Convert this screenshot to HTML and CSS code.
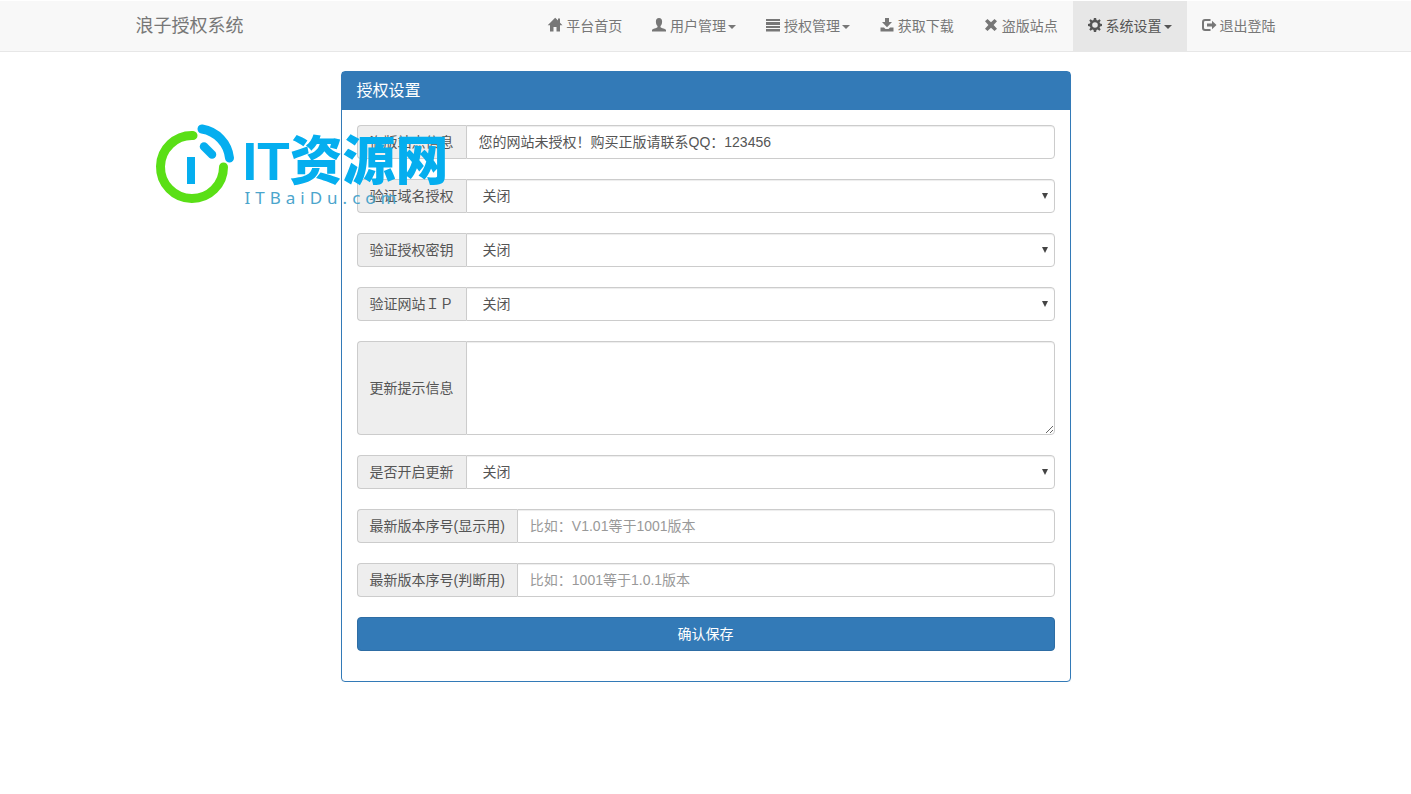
FILE: index.html
```html
<!DOCTYPE html>
<html lang="zh-CN">
<head>
<meta charset="utf-8">
<meta name="viewport" content="width=device-width, initial-scale=1">
<title>授权设置</title>
<link rel="stylesheet" href="styles.css">
</head>
<body>
<header class="navbar">
  <div class="container navbar-inner">
    <a class="brand" href="#">浪子授权系统</a>
    <nav class="nav">
      <a class="nav-link" href="#"><svg class="icon" viewBox="0 0 14 14"><path d="M7.200-.3-.3 7.200H2V13.500h3.500V9h3v4.500H12V7.200h2.500L12 4.700V.5h-2v2z"/></svg> 平台首页</a>
      <a class="nav-link" href="#"><svg class="icon" viewBox="0 0 14 14"><path d="M7 0C4.900 0 3.900 1.500 3.900 3.500c0 2 .6 3.500 1.600 4.500v1.200C4.500 10.200.5 10.700 0 12v1.500h14V12c-.5-1.300-4.500-1.800-5.500-2.800V8c1-1 1.600-2.500 1.600-4.500C10.100 1.500 9.100 0 7 0z"/></svg> 用户管理<span class="caret"></span></a>
      <a class="nav-link" href="#"><svg class="icon" viewBox="0 0 14 14"><path d="M0 1h14v2H0zM0 4h14v3H0zM0 8h14v2H0zM0 11h14v2.500H0z"/></svg> 授权管理<span class="caret"></span></a>
      <a class="nav-link" href="#"><svg class="icon" viewBox="0 0 14 14"><path d="M5 0h4v4h3L7 9.200 2 4h3zM.5 9.500H4L5.500 11h3L10 9.500h3.500v4H.5z"/></svg> 获取下载</a>
      <a class="nav-link" href="#"><svg class="icon" viewBox="0 0 14 14"><path d="M3.500 1 7 4.200 10.500 1 13 3.300 9.600 7 13 10.700 10.500 13 7 9.800 3.500 13 1 10.700 4.400 7 1 3.300z"/></svg> 盗版站点</a>
      <a class="nav-link active" href="#" aria-current="page"><svg class="icon" viewBox="0 0 14 14"><path fill-rule="evenodd" d="M5.900 0h2.200l.4 1.900 1.200.5L11.400 1.300 12.700 2.600 11.600 4.300l.5 1.200 1.900.4v2.200l-1.900.4-.5 1.200 1.100 1.700-1.300 1.300-1.700-1.100-1.200.5-.4 1.900H5.900l-.4-1.900-1.200-.5-1.700 1.100-1.300-1.300 1.100-1.700-.5-1.200L0 8.100V5.900l1.900-.4.5-1.200L1.300 2.600 2.600 1.300l1.700 1.100 1.200-.5zM7 4.200a2.800 2.800 0 1 0 0 5.600 2.800 2.800 0 0 0 0-5.600z"/></svg> 系统设置<span class="caret"></span></a>
      <a class="nav-link" href="#"><svg class="icon" viewBox="0 0 14 14"><path d="M8.500 1H3Q0 1 0 4v6q0 3 3 3h5.500v-2H3.300Q2 11 2 9.800V4.200Q2 3 3.300 3h5.200zM10 2.800 14.500 7 10 11.200V8.500H5v-3h5z"/></svg> 退出登陆</a>
    </nav>
  </div>
</header>

<main class="container">
  <section class="panel">
    <h1 class="panel-heading">授权设置</h1>
    <form class="panel-body">
      <div class="input-group">
        <label class="addon" for="notice">盗版站点信息</label>
        <input class="control" id="notice" type="text" value="您的网站未授权！购买正版请联系QQ：123456">
      </div>
      <div class="input-group">
        <label class="addon" for="domain">验证域名授权</label>
        <div class="select-wrap"><select class="control" id="domain"><option>关闭</option><option>开启</option></select></div>
      </div>
      <div class="input-group">
        <label class="addon" for="key">验证授权密钥</label>
        <div class="select-wrap"><select class="control" id="key"><option>关闭</option><option>开启</option></select></div>
      </div>
      <div class="input-group">
        <label class="addon" for="ip">验证网站ＩＰ</label>
        <div class="select-wrap"><select class="control" id="ip"><option>关闭</option><option>开启</option></select></div>
      </div>
      <div class="input-group">
        <label class="addon" for="update-info">更新提示信息</label>
        <textarea class="control" id="update-info" rows="4"></textarea>
      </div>
      <div class="input-group">
        <label class="addon" for="update">是否开启更新</label>
        <div class="select-wrap"><select class="control" id="update"><option>关闭</option><option>开启</option></select></div>
      </div>
      <div class="input-group">
        <label class="addon" for="version-name">最新版本序号(显示用)</label>
        <input class="control" id="version-name" type="text" placeholder="比如：V1.01等于1001版本">
      </div>
      <div class="input-group">
        <label class="addon" for="version-code">最新版本序号(判断用)</label>
        <input class="control" id="version-code" type="text" placeholder="比如：1001等于1.0.1版本">
      </div>
      <button class="submit" type="submit">确认保存</button>
    </form>
  </section>
  <div class="watermark">
    <svg class="watermark-logo" viewBox="0 0 80 80" fill="none" stroke-linecap="round">
      <path d="M38 11.500A31.500 31.500 0 1 0 68.500 43" stroke="#5adf16" stroke-width="9"/>
      <path d="M47 5A33 33 0 0 1 74.500 34" stroke="#05aeef" stroke-width="9"/>
      <path d="M49 22.500 57 30.500" stroke="#05aeef" stroke-width="8.500"/>
      <path d="M32 33h8v27h-8z" fill="#05aeef"/>
    </svg>
    <div class="watermark-text">
      <span class="watermark-title">IT资源网</span>
      <span class="watermark-site">ITBaiDu.com</span>
    </div>
  </div>
</main>
</body>
</html>
```
FILE: styles.css
```css
* { box-sizing: border-box; }

body {
  margin: 0;
  background: #fff;
  color: #333;
  font: 14px/20px "Liberation Sans", "Noto Sans CJK SC", sans-serif;
}

.container {
  position: relative;
  max-width: 1170px;
  margin: 0 auto;
  padding: 0 15px;
}

.navbar {
  margin-bottom: 19px;
  border-top: 1px solid #fff;
  border-bottom: 1px solid #e7e7e7;
  background: #f8f8f8;
}

.navbar-inner {
  display: flex;
  flex-wrap: wrap;
  justify-content: space-between;
  padding-right: 0;
}

.brand {
  padding: 15px 0;
  color: #777;
  font-size: 18px;
  text-decoration: none;
}

.nav { display: flex; flex-wrap: wrap; }

.nav-link {
  padding: 15px;
  color: #777;
  text-decoration: none;
  white-space: nowrap;
}

.nav-link.active { background: #e7e7e7; color: #555; }

.icon {
  width: 14px;
  height: 14px;
  overflow: visible;
  fill: currentColor;
  vertical-align: -1px;
}

.caret {
  display: inline-block;
  margin-left: 2px;
  border: 4px solid transparent;
  border-top-color: currentColor;
  border-bottom: 0;
  vertical-align: middle;
}

.panel {
  max-width: 730px;
  margin: 0 auto;
  border: 1px solid #337ab7;
  border-radius: 4px;
  box-shadow: 0 1px 1px rgba(0, 0, 0, .05);
}

.panel-heading {
  margin: 0;
  padding: 10px 15px;
  background: #337ab7;
  color: #fff;
  font-size: 16px;
  font-weight: 400;
  line-height: 18px;
}

.panel-body {
  display: flex;
  flex-direction: column;
  gap: 20px;
  padding: 15px 15px 30px;
}

.input-group { display: flex; }

.addon {
  display: flex;
  align-items: center;
  padding: 0 12px;
  border: 1px solid #ccc;
  border-right: 0;
  border-radius: 4px 0 0 4px;
  background: #eee;
  color: #555;
  white-space: nowrap;
}

.control {
  display: block;
  flex: 1;
  width: 100%;
  min-width: 0;
  min-height: 34px;
  margin: 0;
  padding: 6px 12px;
  border: 1px solid #ccc;
  border-radius: 0 4px 4px 0;
  background: #fff;
  box-shadow: inset 0 1px 1px rgba(0, 0, 0, .075);
  color: #555;
  font: inherit;
}

.control::placeholder { color: #999; opacity: 1; }

textarea.control { resize: vertical; }

.select-wrap { position: relative; flex: 1; }

.select-wrap .control { padding-left: 16px; appearance: none; }

.select-wrap::after {
  content: "";
  position: absolute;
  top: 14px;
  right: 7px;
  border: 3px solid transparent;
  border-top: 6px solid #444;
  border-bottom: 0;
  pointer-events: none;
}

.submit {
  padding: 6px 12px;
  border: 1px solid #2e6da4;
  border-radius: 4px;
  background: #337ab7;
  color: #fff;
  font: inherit;
}

.watermark {
  position: absolute;
  top: 53px;
  left: 34px;
  display: flex;
  gap: 8px;
  pointer-events: none;
}

.watermark-logo {
  width: 80px;
  height: 80px;
  overflow: visible;
}

.watermark-text {
  display: flex;
  flex-direction: column;
  padding-top: 12px;
  color: #05aeef;
  white-space: nowrap;
}

.watermark-title { font-size: 53px; font-weight: 900; line-height: 52px; }

.watermark-site {
  padding-left: 2px;
  color: #4ba5cc;
  font-family: "Noto Sans", sans-serif;
  font-size: 17px;
  letter-spacing: 5px;
}
```
